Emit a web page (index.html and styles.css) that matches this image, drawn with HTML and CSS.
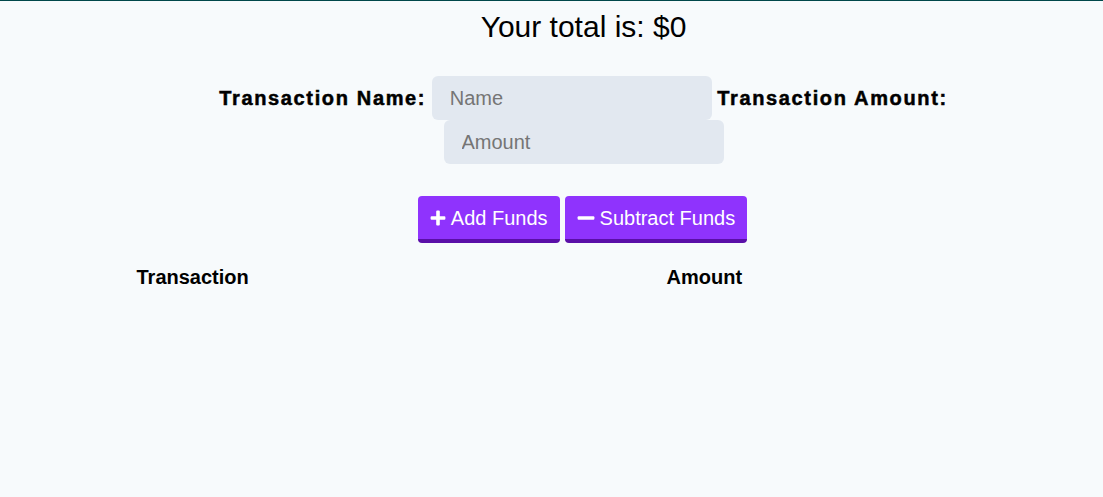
FILE: index.html
```html
<!DOCTYPE html>
<html lang="en">
<head>
<meta charset="utf-8">
<title>Budget Tracker</title>
<link rel="stylesheet" href="styles.css">
</head>
<body>
<main class="wrapper">
  <h1 class="total">Your total is: $<span>0</span></h1>
  <form class="form">
    <label class="label" for="t-name">Transaction Name:</label>
    <input class="input" id="t-name" type="text" placeholder="Name">
    <label class="label" for="t-amount">Transaction Amount:</label>
    <input class="input" id="t-amount" type="number" placeholder="Amount">
  </form>
  <div class="actions">
    <button class="btn" type="button">
      <svg class="icon" viewBox="0 0 16 16" aria-hidden="true"><path d="M6.2 1.6a1 1 0 0 1 1-1h1.6a1 1 0 0 1 1 1v4.6h4.6a1 1 0 0 1 1 1v1.6a1 1 0 0 1-1 1H9.8v4.6a1 1 0 0 1-1 1H7.2a1 1 0 0 1-1-1V9.8H1.6a1 1 0 0 1-1-1V7.2a1 1 0 0 1 1-1h4.6z" fill="#fff"/></svg>
      Add Funds
    </button>
    <button class="btn" type="button">
      <svg class="icon icon-wide" viewBox="0 0 18 16" aria-hidden="true"><rect x="0.6" y="6.2" width="16.8" height="3.6" rx="1" fill="#fff"/></svg>
      Subtract Funds
    </button>
  </div>
  <table class="table">
    <colgroup><col class="col-name"><col></colgroup>
    <thead>
      <tr><th>Transaction</th><th>Amount</th></tr>
    </thead>
    <tbody></tbody>
  </table>
</main>
</body>
</html>
```
FILE: styles.css
```css
html, body {
  margin: 0;
  padding: 0;
}
body {
  background: #f7fafc;
  border-top: 1px solid #00474a;
  font-family: "Liberation Sans", Arial, sans-serif;
  color: #000;
  min-height: 496px;
}
.wrapper {
  padding-left: 64px;
  display: flex;
  flex-direction: column;
  align-items: center;
}
.total {
  margin: 9px 0 0;
  font-size: 30px;
  font-weight: 400;
  line-height: 34px;
}
.form {
  margin-top: 32px;
  width: 900px;
  display: flex;
  flex-wrap: wrap;
  justify-content: center;
  align-items: center;
  column-gap: 5.5px;
}
.label {
  font-size: 20px;
  font-weight: 700;
  letter-spacing: 1.65px;
  -webkit-text-stroke: 0.5px #000;
}
.input {
  box-sizing: border-box;
  width: 280px;
  height: 44px;
  border: 0;
  border-radius: 6px;
  background: #e2e8f0;
  padding: 0 18px;
  font-family: "Liberation Sans", Arial, sans-serif;
  font-size: 20px;
  color: #2d3748;
  outline: none;
  -moz-appearance: textfield;
}
.input::placeholder {
  color: #757575;
}
.input::-webkit-outer-spin-button,
.input::-webkit-inner-spin-button {
  -webkit-appearance: none;
  margin: 0;
}
.actions {
  margin-top: 32px;
  margin-right: 2px;
  display: flex;
  gap: 5px;
}
.btn {
  display: flex;
  align-items: center;
  gap: 5px;
  height: 47px;
  box-sizing: border-box;
  padding: 0 12px;
  border: 0;
  border-bottom: 4px solid #5a0fa8;
  border-radius: 4px;
  background: #8f33fd;
  color: #fff;
  font-family: "Liberation Sans", Arial, sans-serif;
  font-size: 20px;
  line-height: 24px;
  cursor: pointer;
}
.icon {
  width: 16px;
  height: 16px;
  flex: none;
}
.icon-wide {
  width: 18px;
}
.table {
  margin-top: 22px;
  width: 894px;
  table-layout: fixed;
  border-collapse: collapse;
}
.col-name {
  width: 530px;
}
.table th {
  padding: 0;
  text-align: left;
  font-size: 20px;
  font-weight: 700;
  line-height: 24px;
}
```
